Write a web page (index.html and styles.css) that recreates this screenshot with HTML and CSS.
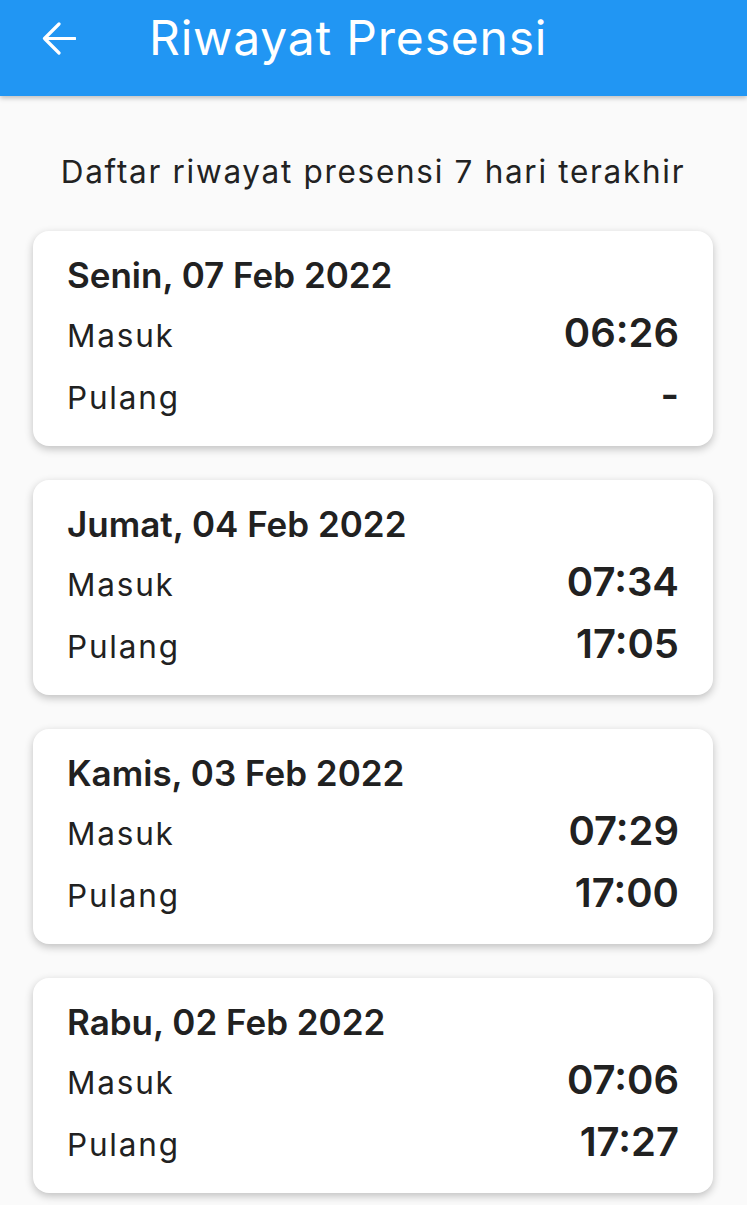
FILE: index.html
```html
<!DOCTYPE html>
<html lang="id">
<head>
<meta charset="utf-8">
<title>Riwayat Presensi</title>
<link rel="stylesheet" href="styles.css">
</head>
<body>
<header class="appbar">
  <svg class="back" viewBox="0 0 34 34" width="34" height="34" aria-hidden="true">
    <path d="M33 16.5H2.5 M17 2L2.5 16.5L17 31" fill="none" stroke="#fff" stroke-width="3.2" stroke-linecap="round" stroke-linejoin="round"/>
  </svg>
  <h1 class="title">Riwayat Presensi</h1>
</header>
<main class="content">
  <p class="subtitle">Daftar riwayat presensi 7 hari terakhir</p>
  <section class="card">
    <h2 class="date">Senin, 07 Feb 2022</h2>
    <div class="row"><span class="label">Masuk</span><span class="time">06:26</span></div>
    <div class="row"><span class="label">Pulang</span><span class="time">-</span></div>
  </section>
  <section class="card">
    <h2 class="date">Jumat, 04 Feb 2022</h2>
    <div class="row"><span class="label">Masuk</span><span class="time">07:34</span></div>
    <div class="row"><span class="label">Pulang</span><span class="time">17:05</span></div>
  </section>
  <section class="card">
    <h2 class="date">Kamis, 03 Feb 2022</h2>
    <div class="row"><span class="label">Masuk</span><span class="time">07:29</span></div>
    <div class="row"><span class="label">Pulang</span><span class="time">17:00</span></div>
  </section>
  <section class="card">
    <h2 class="date">Rabu, 02 Feb 2022</h2>
    <div class="row"><span class="label">Masuk</span><span class="time">07:06</span></div>
    <div class="row"><span class="label">Pulang</span><span class="time">17:27</span></div>
  </section>
</main>
</body>
</html>
```
FILE: styles.css
```css
html, body {
  margin: 0;
  padding: 0;
  background: #fafafa;
  font-family: "Inter", "Noto Sans", sans-serif;
  color: #212121;
  overflow: hidden;
  height: 1205px;
}
.appbar {
  height: 96px;
  box-sizing: border-box;
  background: #2196f3;
  display: flex;
  align-items: flex-start;
  padding: 8px 0 0 42px;
  box-shadow: 0 2px 5px rgba(0,0,0,0.25);
  position: relative;
  z-index: 1;
}
.back {
  display: block;
  margin-top: 14px;
  flex: none;
}
.title {
  margin: 0 0 0 73px;
  font-size: 48px;
  line-height: 60px;
  font-weight: 400;
  letter-spacing: 0.8px;
  color: #fff;
}
.content {
  padding: 0 34px 0 33px;
}
.subtitle {
  margin: 54px 0 0;
  text-align: center;
  font-size: 31.5px;
  line-height: 44px;
  letter-spacing: 1.7px;
  color: #222;
  white-space: nowrap;
}
.card {
  background: #fff;
  border-radius: 16px;
  box-shadow: 0 3px 8px rgba(0,0,0,0.24);
  margin-top: 37px;
  height: 215px;
  box-sizing: border-box;
  padding: 24px 34px 0 34px;
}
.card + .card {
  margin-top: 34px;
}
.date {
  margin: 0 0 7px;
  font-size: 35px;
  font-weight: 600;
  line-height: 40px;
}
.row {
  display: flex;
  justify-content: space-between;
  align-items: baseline;
  height: 62px;
}
.label {
  font-size: 31.5px;
  line-height: 62px;
  letter-spacing: 1.8px;
  font-weight: 400;
}
.time {
  font-size: 40px;
  line-height: 62px;
  font-weight: 600;
}
```
